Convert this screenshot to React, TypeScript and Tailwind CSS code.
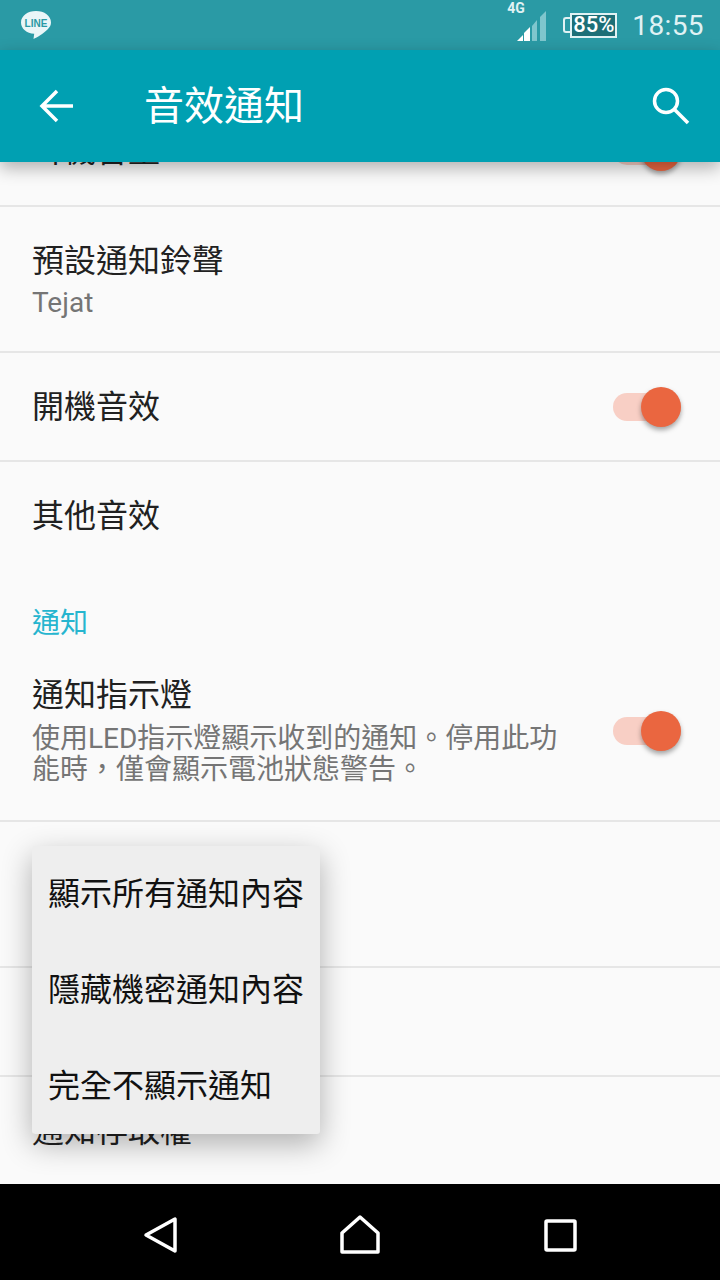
const Toggle = () => (
  <div className="relative h-[28px] w-[68px] shrink-0 rounded-full bg-[#f8cfc5]">
    <div className="absolute right-0 top-[-6px] h-[40px] w-[40px] rounded-full bg-[#ea6640] shadow-[0_3px_5px_rgba(0,0,0,0.35)]" />
  </div>
);

const Divider = () => <div className="h-[2px] bg-[#e6e6e6]" />;

const Row = ({ title, sub, h, toggle }: { title?: string; sub?: string; h: string; toggle?: boolean }) => (
  <div className={`flex items-center justify-between pl-[32px] pr-[39px] ${h}`}>
    <div className="min-w-0">
      {title && <p className="text-[32px] leading-[42px] text-[#212121]">{title}</p>}
      {sub && <p className="mt-[5px] text-[28px] leading-[31px] text-[#757575]">{sub}</p>}
    </div>
    {toggle && <Toggle />}
  </div>
);

const StatusBar = () => (
  <div className="flex h-[50px] shrink-0 items-center justify-between bg-[#2a9aa5] pl-[20px] pr-[16px]">
    <svg width="32" height="32" viewBox="0 0 32 32" className="mt-[1px]">
      <path d="M16 1C7.700 1 1 5.800 1 12.500c0 6.200 5.700 10.800 13.200 11.300l-.7 5.200c3.500-1.500 9.800-5.200 14-9.500 2.300-2.200 3.500-4.400 3.500-7C31 5.800 24.300 1 16 1Z" fill="#eaf6f8" />
      <text x="16" y="16.500" textAnchor="middle" fontSize="10" fontWeight="700" fill="#2a9aa5" fontFamily="'Liberation Sans', sans-serif">LINE</text>
    </svg>
    <div className="flex items-center">
      <div className="relative h-[50px] w-[30px]">
        <span className="absolute left-[-9px] top-0 text-[14px] font-bold leading-[16px] text-[#e0f2f4]">4G</span>
        <svg width="30" height="30" viewBox="0 0 30 30" className="absolute left-0 top-[11px]">
          <path d="M1 30 L7 24 V30 Z" fill="#ffffff" />
          <path d="M8 30 V22 L14 16 V30 Z" fill="#ffffff" />
          <path d="M16 30 V15 L21 9 V30 Z" fill="#7fc6cd" />
          <path d="M24 30 V6 L30 0 V30 Z" fill="#7fc6cd" />
        </svg>
      </div>
      <div className="ml-[17px] flex items-center">
        <div className="h-[16px] w-[7px] rounded-l-[3px] border-y-2 border-l-2 border-[#e0f2f4]" />
        <div className="flex h-[25px] w-[47px] items-center justify-center border-2 border-[#e0f2f4] bg-[#1d6f77] text-[22px] font-medium leading-none text-white">85%</div>
      </div>
      <span className="ml-[15px] mt-[2px] text-[28px] leading-none tracking-[0.4px] text-[#e0f2f4]">18:55</span>
    </div>
  </div>
);

const NavBar = () => (
  <div className="flex h-[96px] shrink-0 items-center justify-between bg-black px-[140px] pt-[6px]">
    <svg width="40" height="40" viewBox="0 0 40 40" fill="none" stroke="white" strokeWidth="3.500" strokeLinejoin="round">
      <path d="M6 20 L35 4 V36 Z" />
    </svg>
    <svg width="40" height="40" viewBox="0 0 40 40" fill="none" stroke="white" strokeWidth="3.500" strokeLinejoin="round">
      <path d="M20 2 L38 18 V37 H2 V18 Z" />
    </svg>
    <svg width="40" height="40" viewBox="0 0 40 40" fill="none" stroke="white" strokeWidth="3.500" strokeLinejoin="round">
      <rect x="6" y="6" width="29" height="29" rx="1" />
    </svg>
  </div>
);

export default function App() {
  return (
    <div
      className="relative flex h-[1280px] w-[720px] flex-col overflow-hidden bg-[#fafafa]"
      style={{ fontFamily: "Roboto, 'Noto Sans CJK TC', sans-serif" }}
    >
      <StatusBar />
      <header className="relative z-10 flex h-[112px] shrink-0 items-center bg-[#00a0b2] pl-[39px] pr-[30px] text-white shadow-[0_6px_16px_rgba(0,0,0,0.3)]">
        <svg width="34" height="34" viewBox="0 0 34 34" fill="none" stroke="white" strokeWidth="3.500">
          <path d="M34 17 H4 M18 2 L3 17 L18 32" />
        </svg>
        <h1 className="ml-[71px] flex-1 pt-[2px] text-[40px] leading-none">音效通知</h1>
        <svg width="38" height="38" viewBox="0 0 38 38" fill="none" stroke="white" strokeWidth="3.500" className="mt-[-1px]">
          <circle cx="14" cy="14" r="11.500" />
          <path d="M22.500 22.500 L36 36" />
        </svg>
      </header>
      <main className="min-h-0 flex-1 overflow-hidden">
        <div className="mt-[-65px]">
          <Row title="耳機音量" h="h-[108px]" toggle />
          <Divider />
          <Row title="預設通知鈴聲" sub="Tejat" h="h-[144px]" />
          <Divider />
          <Row title="開機音效" h="h-[107px]" toggle />
          <Divider />
          <Row title="其他音效" h="h-[107px]" />
          <p className="pl-[32px] pt-[35px] text-[28px] leading-[40px] text-[#26b5cf]">通知</p>
          <div className="flex h-[176px] items-center justify-between pl-[32px] pr-[39px] pt-[1px]">
            <div className="mb-[6px] w-[540px]">
              <p className="text-[32px] leading-[42px] text-[#212121]">通知指示燈</p>
              <p className="mt-[7px] text-[28px] leading-[31px] text-[#757575]">使用LED指示燈顯示收到的通知。停用此功能時，僅會顯示電池狀態警告。</p>
            </div>
            <div className="mb-[4px]">
              <Toggle />
            </div>
          </div>
          <Divider />
          <Row h="h-[144px]" />
          <Divider />
          <Row h="h-[107px]" />
          <Divider />
          <Row title="通知存取權" h="h-[107px]" />
        </div>
      </main>
      <NavBar />
      <div className="absolute left-[32px] top-[846px] z-20 flex h-[288px] w-[288px] flex-col rounded-[3px] bg-[#eeeeee] pl-[16px] text-[32px] text-[#111111] shadow-[0_10px_30px_rgba(0,0,0,0.3)]">
        <div className="flex h-[96px] items-center">顯示所有通知內容</div>
        <div className="flex h-[96px] items-center">隱藏機密通知內容</div>
        <div className="flex h-[96px] items-center">完全不顯示通知</div>
      </div>
    </div>
  );
}
